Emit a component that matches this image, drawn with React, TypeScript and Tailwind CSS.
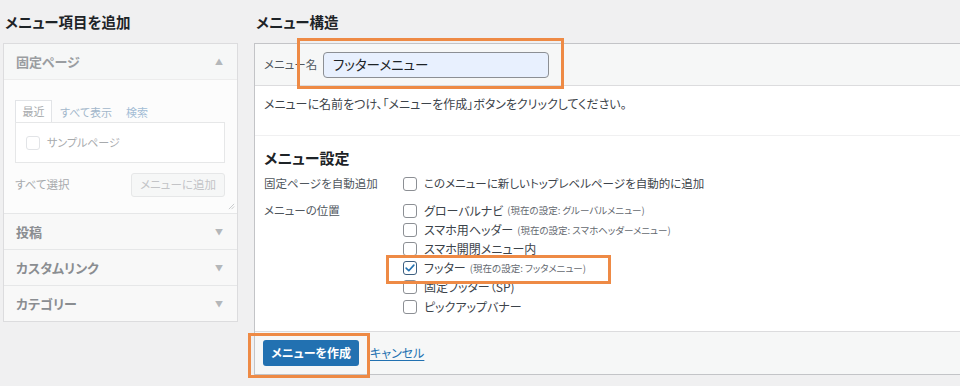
import React from "react";

const locations = [
  { label: "グローバルナビ", note: "(現在の設定: グルーバルメニュー)", checked: false },
  { label: "スマホ用ヘッダー", note: "(現在の設定: スマホヘッダーメニュー)", checked: false },
  { label: "スマホ開閉メニュー内", note: "", checked: false },
  { label: "フッター", note: "(現在の設定: フッタメニュー)", checked: true },
  { label: "固定フッター（SP)", note: "", checked: false },
  { label: "ピックアップバナー", note: "", checked: false },
];

const Checkbox = ({ checked = false, faded = false }: { checked?: boolean; faded?: boolean }) => (
  <span
    className={`flex h-[14px] w-[14px] shrink-0 items-center justify-center rounded-[3px] border bg-white ${
      checked ? "border-[#3d5f80]" : faded ? "border-[#e2e4e7]" : "border-[#8c8f94]"
    }`}
  >
    {checked && (
      <svg viewBox="0 0 14 14" className="h-[12px] w-[12px]">
        <path d="M2.5 7.2 L5.6 10.2 L11.5 3.6" fill="none" stroke="#2271b1" strokeWidth="1.9" strokeLinecap="round" strokeLinejoin="round" />
      </svg>
    )}
  </span>
);

const AccordionRow = ({ title }: { title: string }) => (
  <div className="flex h-[36px] items-center justify-between border-t border-[#e6e7e8] bg-[#f8f8f8] pl-[12px] pr-[14px]">
    <span className="text-[13px] font-semibold text-[#8a8d91]">{title}</span>
    <span className="text-[8px] text-[#b4b7ba]">▼</span>
  </div>
);

export default function App() {
  return (
    <div className="relative flex h-[386px] w-[960px] overflow-hidden bg-[#f0f0f1] text-[#3c434a] [font-family:'Noto_Sans_CJK_JP','Noto_Sans',sans-serif] [font-feature-settings:'palt']">
      {/* left column */}
      <div className="ml-[3px] w-[235px] shrink-0">
        <h2 className="flex h-[43px] items-center pl-[2px] text-[14.5px] font-bold text-[#1d2327]">メニュー項目を追加</h2>
        <div className="border border-[#dcdcde] bg-white">
          <div className="flex h-[35px] items-center justify-between bg-[#f6f7f7] pl-[12px] pr-[14px]">
            <span className="text-[13px] font-semibold text-[#9a9da1]">固定ページ</span>
            <span className="text-[8px] text-[#b4b7ba]">▲</span>
          </div>
          <div className="relative h-[134px] border-t border-[#ececec] bg-[#fcfcfc] px-[11px] pt-[20px]">
            <div className="flex h-[22px] items-end text-[11px]">
              <span className="flex h-[22px] w-[37px] items-center justify-center border border-b-0 border-[#e2e4e7] bg-white text-[#a7aaad]">最近</span>
              <span className="ml-[8px] text-[#a3b7cb] leading-[20px]">すべて表示</span>
              <span className="ml-[14px] text-[#a3bdd6] leading-[20px]">検索</span>
            </div>
            <div className="flex h-[41px] w-[210px] items-center gap-[7px] border border-[#e6e7e8] bg-white pl-[10px]">
              <Checkbox faded />
              <span className="text-[11px] text-[#a7aaad]">サンプルページ</span>
            </div>
            <div className="mt-[10px] flex items-center justify-between pr-[1px]">
              <span className="text-[11.5px] text-[#a7aaad]">すべて選択</span>
              <span className="flex h-[24px] w-[94px] items-center justify-center rounded-[3px] border border-[#e6e7e8] bg-[#f6f7f7] text-[11.5px] text-[#c3c4c7]">メニューに追加</span>
            </div>
            <svg viewBox="0 0 8 8" className="absolute bottom-[3px] right-[2px] h-[7px] w-[7px]">
              <path d="M1 7 L7 1 M4 7 L7 4" stroke="#b4b7ba" strokeWidth="0.8" />
            </svg>
          </div>
          <AccordionRow title="投稿" />
          <AccordionRow title="カスタムリンク" />
          <AccordionRow title="カテゴリー" />
        </div>
      </div>

      {/* right column */}
      <div className="ml-[16px] -mr-[4px] flex-1">
        <h2 className="flex h-[43px] items-center pl-[2px] text-[14.5px] font-bold text-[#1d2327]">メニュー構造</h2>
        <div className="border border-[#c3c4c7] bg-white">
          <div className="flex h-[42px] items-center border-b border-[#dcdcde] bg-[#f6f7f7] pl-[9px]">
            <span className="w-[59px] text-[11.5px] text-[#50575e]">メニュー名</span>
            <span className="flex h-[26px] w-[226px] items-center rounded-[4px] border border-[#8c8f94] bg-[#e8f0fe] pl-[9px] text-[13.5px] text-[#1d2327]">
              フッターメニュー
            </span>
          </div>
          <div className="px-[9px] pb-[15px] pt-[8px]">
            <p className="text-[12px] leading-[20px] text-[#3c434a]">メニューに名前をつけ、「メニューを作成」ボタンをクリックしてください。</p>
            <div className="-mx-[9px] mt-[21px] border-t border-[#f0f0f1]" />
            <h3 className="mt-[11px] text-[15px] font-bold leading-[22px] text-[#1d2327]">メニュー設定</h3>
            <div className="mt-[5px] flex h-[20px] items-center text-[11.5px]">
              <span className="w-[139px] text-[#50575e]">固定ページを自動追加</span>
              <Checkbox />
              <span className="ml-[7px] text-[#3c434a]">このメニューに新しいトップレベルページを自動的に追加</span>
            </div>
            <div className="mt-[7px] flex">
              <span className="flex h-[19px] w-[139px] items-center text-[11.5px] text-[#50575e]">メニューの位置</span>
              <div className="flex flex-col">
                {locations.map((loc) => (
                  <div key={loc.label} className="flex h-[19.2px] items-center">
                    <Checkbox checked={loc.checked} />
                    <span className="ml-[7px] text-[12px] text-[#3c434a]">{loc.label}</span>
                    {loc.note && <span className="ml-[4px] text-[9.5px] text-[#646970]">{loc.note}</span>}
                  </div>
                ))}
              </div>
            </div>
          </div>
          <div className="flex h-[43px] items-center border-t border-[#dcdcde] bg-[#f6f7f7] pl-[8px]">
            <span className="flex h-[26px] w-[96px] items-center justify-center rounded-[3px] bg-[#2271b1] text-[12px] font-semibold text-white">
              メニューを作成
            </span>
            <span className="ml-[11px] text-[12px] text-[#2271b1] underline underline-offset-2">キャンセル</span>
          </div>
        </div>
      </div>

      {/* annotation boxes */}
      <div className="pointer-events-none absolute left-[297px] top-[38px] h-[51px] w-[267px] border-[3px] border-[#ee8a45]" />
      <div className="pointer-events-none absolute left-[386px] top-[255px] h-[29px] w-[225px] border-[3px] border-[#ee8a45]" />
      <div className="pointer-events-none absolute left-[248px] top-[333px] h-[45px] w-[122px] border-[3px] border-[#ee8a45]" />
    </div>
  );
}
